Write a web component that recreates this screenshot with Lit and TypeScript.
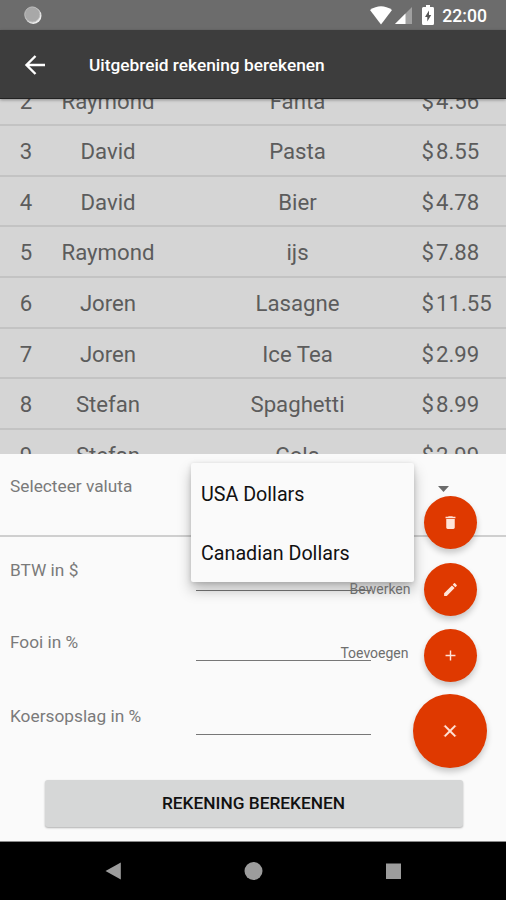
import { LitElement, html, css, svg } from "lit";
import { customElement } from "lit/decorators.js";

interface BillItem {
  nr: number;
  person: string;
  item: string;
  price: string;
}

const ITEMS: BillItem[] = [
  { nr: 2, person: "Raymond", item: "Fanta", price: "4.56" },
  { nr: 3, person: "David", item: "Pasta", price: "8.55" },
  { nr: 4, person: "David", item: "Bier", price: "4.78" },
  { nr: 5, person: "Raymond", item: "ijs", price: "7.88" },
  { nr: 6, person: "Joren", item: "Lasagne", price: "11.55" },
  { nr: 7, person: "Joren", item: "Ice Tea", price: "2.99" },
  { nr: 8, person: "Stefan", item: "Spaghetti", price: "8.99" },
  { nr: 9, person: "Stefan", item: "Cola", price: "2.99" },
];

const CURRENCIES = ["USA Dollars", "Canadian Dollars"];

const trash = svg`<path d="M6 19c0 1.1.9 2 2 2h8c1.100 0 2-.9 2-2V7H6v12zM19 4h-3.500l-1-1h-5l-1 1H5v2h14V4z"/>`;
const pencil = svg`<path d="M3 17.250V21h3.750L17.810 9.940l-3.750-3.750L3 17.250zM20.710 7.040a1 1 0 0 0 0-1.410l-2.340-2.340a1 1 0 0 0-1.410 0l-1.830 1.830 3.750 3.750 1.830-1.830z"/>`;
const plus = svg`<path d="M19 13h-6v6h-2v-6H5v-2h6V5h2v6h6v2z"/>`;
const cross = svg`<path d="M19 6.410 17.590 5 12 10.590 6.410 5 5 6.410 10.590 12 5 17.590 6.410 19 12 13.410 17.590 19 19 17.590 13.410 12z"/>`;

@customElement("status-bar")
class StatusBar extends LitElement {
  static styles = css`
    :host {
      display: flex;
      align-items: center;
      height: 30px;
      box-sizing: border-box;
      padding: 0 19px 0 24px;
      background: #6c6c6c;
      color: #fff;
      font: 500 17.6px/30px Roboto, sans-serif;
    }
    .sync { width: 18px; height: 18px; margin-right: auto; }
    .wifi { width: 22px; height: 19px; }
    .signal { width: 17px; height: 17px; margin-left: 3px; }
    .battery { width: 12px; height: 20px; margin: 0 8px 0 10px; }
    .time { padding-top: 2px; }
  `;
  render() {
    return html`
      <svg class="sync" viewBox="0 0 18 18">
        <circle cx="9.300" cy="9.700" r="8.200" fill="#ececec"/>
        <circle cx="8.300" cy="8.500" r="7.600" fill="#a8a8a8" stroke="#bdbdbd" stroke-width="1"/>
      </svg>
      <svg class="wifi" viewBox="0 0 22 19"><path fill="#fff" d="M0 4Q11-3.500 22 4L11 18.500z"/></svg>
      <svg class="signal" viewBox="0 0 17 17">
        <path fill="#a0a0a0" d="M17 0v17H0z"/><path fill="#fff" d="M10.500 6.500V17H0z"/>
      </svg>
      <svg class="battery" viewBox="0 0 12 20">
        <path fill="#fff" d="M4 0h4v2h2.600Q12 2 12 3.400v15Q12 20 10.600 20H1.400Q0 20 0 18.500v-15Q0 2 1.400 2H4z"/>
        <path fill="#555" d="M7 5.500 3 12h2.300v4.500L9.200 10H7z"/>
      </svg>
      <span class="time">22:00</span>
    `;
  }
}

@customElement("bill-list")
class BillList extends LitElement {
  static styles = css`
    :host {
      display: block;
      height: 355px;
      overflow: hidden;
      background: #d5d5d5;
      color: #5c5c5c;
      font: 22.200px/50px Roboto, sans-serif;
    }
    .rows { margin-top: -23.200px; }
    .row {
      display: grid;
      grid-template-columns: 52px 112px 267px 1fr;
      height: 50.550px;
      box-sizing: border-box;
      border-bottom: 2px solid #c3c3c3;
      text-align: center;
      white-space: nowrap;
    }
    .price { text-align: left; margin-left: -9.500px; }
    .sign { margin-right: 2px; }
  `;
  render() {
    return html`<div class="rows">
      ${ITEMS.map(
        (r) => html`<div class="row">
          <span>${r.nr}</span><span>${r.person}</span><span>${r.item}</span>
          <span class="price"><span class="sign">$</span>${r.price}</span>
        </div>`
      )}
    </div>`;
  }
}

@customElement("app-root")
class AppRoot extends LitElement {
  static styles = css`
    :host {
      display: flex;
      flex-direction: column;
      width: 506px;
      height: 900px;
      overflow: hidden;
      background: #000;
      font-family: Roboto, sans-serif;
    }
    .appbar {
      display: flex;
      align-items: center;
      height: 69px;
      box-sizing: border-box;
      padding: 1px 0 0 24px;
      gap: 43px;
      background: #3d3d3d;
      color: #fff;
      font-size: 17.300px;
      font-weight: 500;
      border-bottom: 1px solid #222;
      box-shadow: 0 1px 3px rgba(0, 0, 0, 0.35);
      z-index: 1;
    }
    .title { padding-top: 1px; }
    .back { width: 22px; height: 22px; }
    .sheet {
      position: relative;
      height: 388px;
      box-sizing: border-box;
      background: #fafafa;
      border-bottom: 1px solid #8a8a8a;
      color: #7a7a7a;
      font-size: 17.300px;
    }
    .field {
      display: grid;
      grid-template-columns: 186px 174.500px;
      padding-left: 10px;
      box-sizing: border-box;
      line-height: 24px;
    }
    .select { height: 83px; padding-top: 20px; border-bottom: 2px solid #cfcfcf; }
    .caret {
      justify-self: end;
      margin: 12px -78px 0 0;
      width: 11px;
      height: 6px;
    }
    .tax { height: 72px; padding-top: 21px; }
    .tip { height: 73px; padding-top: 21px; }
    .rate { height: 98px; padding-top: 22px; }
    .line { border-bottom: 1px solid #777; }
    .tax .line { height: 32px; }
    .tip .line { height: 30px; }
    .rate .line { height: 30px; }
    .submit {
      display: block;
      width: 418px;
      height: 47px;
      margin: 0 0 0 44.500px;
      padding: 0 0 2px;
      border: 0;
      border-radius: 3px;
      background: #d6d7d7;
      box-shadow: 0 1px 2px rgba(0, 0, 0, 0.3);
      color: #111;
      font: 500 17.300px/44px Roboto, sans-serif;
    }
    .menu {
      position: absolute;
      left: 191px;
      top: 9px;
      width: 223px;
      height: 119px;
      border-radius: 2px;
      background: #fafafa;
      box-shadow: 0 8px 14px rgba(0, 0, 0, 0.26), 0 1px 5px rgba(0, 0, 0, 0.14);
      color: #111;
      font-size: 19.700px;
      line-height: 59px;
    }
    .option { padding: 2px 0 0 10px; height: 57px; }
    .speed-dial {
      position: absolute;
      right: 19px;
      top: 42px;
      display: flex;
      flex-direction: column;
      align-items: flex-end;
    }
    .action { display: flex; align-items: center; height: 53px; margin: 0 10px 13.500px 0; }
    .hint { font-size: 14px; color: #6e6e6e; }
    .edit .hint { margin-right: 13.500px; }
    .add .hint { margin: -5px 15.500px 0 0; }
    .fab {
      display: grid;
      place-items: center;
      width: 53px;
      height: 53px;
      padding: 0;
      border: 0;
      border-radius: 50%;
      background: #df3900;
      box-shadow: 0 4px 6px rgba(0, 0, 0, 0.2);
    }
    .fab svg { width: 17px; height: 17px; fill: #ffe4d8; }
    .main { width: 74px; height: 74px; margin-top: -2px; }
    .main svg { width: 20px; height: 20px; stroke: #ffe4d8; stroke-width: 0.6px; }
    .nav { display: flex; justify-content: center; height: 58px; box-sizing: border-box; }
    .keys { width: 296px; height: 18px; margin: 20px 0 0; fill: #9c9c9c; }
  `;

  render() {
    return html`
      <status-bar></status-bar>
      <header class="appbar">
        <svg class="back" viewBox="0 0 22 22" fill="none" stroke="#fff" stroke-width="2.400">
          <path d="M21 11H3M11.500 2 2.500 11l9 9"/>
        </svg>
        <span class="title">Uitgebreid rekening berekenen</span>
      </header>
      <bill-list></bill-list>
      <section class="sheet">
        <div class="field select">
          <span>Selecteer valuta</span>
          <svg class="caret" viewBox="0 0 11 6"><path fill="#6b6b6b" d="M0 0h11L5.500 6z"/></svg>
        </div>
        <div class="field tax"><span>BTW in $</span><span class="line"></span></div>
        <div class="field tip"><span>Fooi in %</span><span class="line"></span></div>
        <div class="field rate"><span>Koersopslag in %</span><span class="line"></span></div>
        <button class="submit">REKENING BEREKENEN</button>
        <div class="menu">
          ${CURRENCIES.map((c) => html`<div class="option">${c}</div>`)}
        </div>
        <div class="speed-dial">
          <div class="action">
            <button class="fab"><svg viewBox="0 0 24 24">${trash}</svg></button>
          </div>
          <div class="action edit">
            <span class="hint">Bewerken</span>
            <button class="fab"><svg viewBox="0 0 24 24">${pencil}</svg></button>
          </div>
          <div class="action add">
            <span class="hint">Toevoegen</span>
            <button class="fab"><svg viewBox="0 0 24 24">${plus}</svg></button>
          </div>
          <button class="fab main"><svg viewBox="0 0 24 24">${cross}</svg></button>
        </div>
      </section>
      <nav class="nav">
        <svg class="keys" viewBox="0 0 296 18">
          <path d="M.5 9 15.800.5v17z"/>
          <circle cx="148.500" cy="9" r="9"/>
          <rect x="281" y="1.500" width="15" height="15.500"/>
        </svg>
      </nav>
    `;
  }
}
